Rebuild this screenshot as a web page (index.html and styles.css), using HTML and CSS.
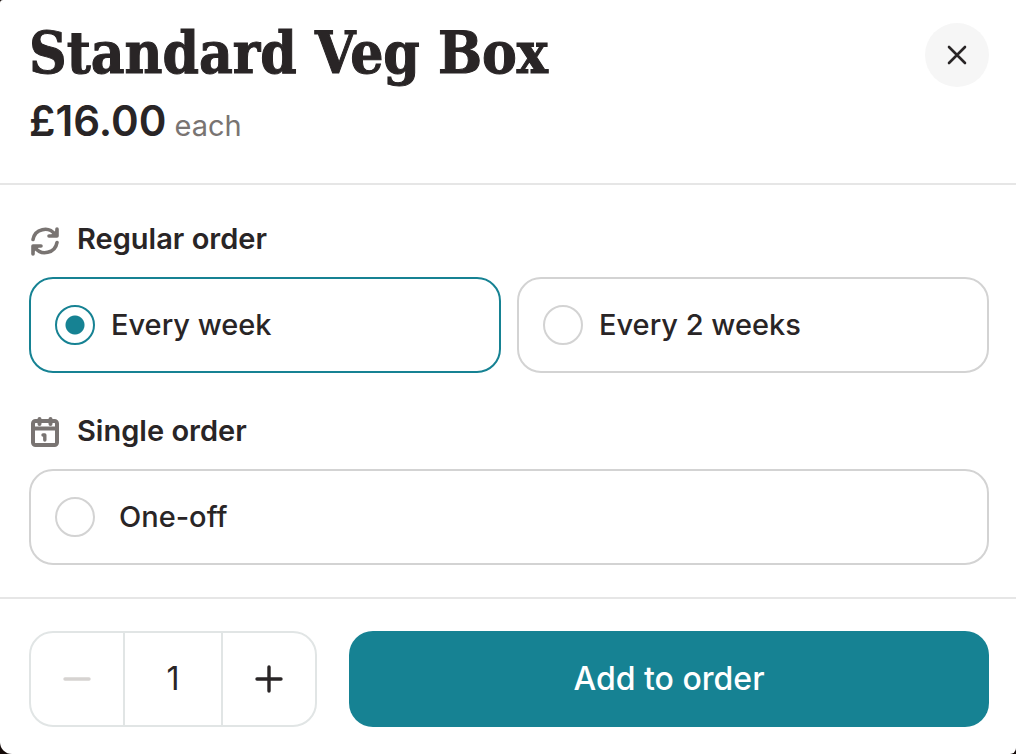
FILE: index.html
```html
<!DOCTYPE html>
<html lang="en">

<head>
    <meta charset="UTF-8">
    <meta name="viewport" content="width=device-width, initial-scale=1.0">
    <title>Standard Veg Box</title>
    <link rel="stylesheet" href="styles.css">
</head>

<body>
    <form action="#" class="dialog">
        <header class="dialog__header">
            <div>
                <h1>Standard Veg Box</h1>
                <p class="price">£16.00<span class="price__unit"> each</span></p>
            </div>
            <button type="button" class="close" aria-label="Close">
                <svg width="20" height="20" viewBox="0 0 20 20" fill="none" stroke="currentColor" stroke-width="2.6"
                    stroke-linecap="round">
                    <path d="M2 2l16 16M18 2L2 18" />
                </svg>
            </button>
        </header>

        <div class="dialog__body">
            <fieldset class="group">
                <legend class="group__title">
                    <svg width="32" height="32" viewBox="0 0 32 32" fill="none" stroke="currentColor" stroke-width="3.6"
                        stroke-linecap="round" stroke-linejoin="round">
                        <path d="M4 14.5A12.2 12.2 0 0 1 26 9.5M28 4v7h-8" />
                        <path d="M28 17.5A12.2 12.2 0 0 1 6 22.5M4 29v-8h8" />
                        <path d="M27.5 6L23 10.5h4.5zM4.5 26L9 21.5H4.5z" fill="currentColor" stroke-width="2" />
                    </svg>
                    Regular order
                </legend>
                <div class="options">
                    <label class="option">
                        <input type="radio" name="frequency" value="1" checked>
                        <span>Every week</span>
                    </label>
                    <label class="option">
                        <input type="radio" name="frequency" value="2">
                        <span>Every 2 weeks</span>
                    </label>
                </div>
            </fieldset>

            <fieldset class="group">
                <legend class="group__title">
                    <svg width="32" height="32" viewBox="0 0 32 32" fill="none" stroke="currentColor" stroke-width="4"
                        stroke-linecap="round" stroke-linejoin="round">
                        <rect x="4" y="4" width="24" height="24" rx="2.5" />
                        <path d="M4 11.5h24M10.5 2v5M21.5 2v5" />
                        <path d="M14 18h1.8v5" stroke-width="3.4" />
                    </svg>
                    Single order
                </legend>
                <label class="option option--single">
                    <input type="radio" name="frequency" value="0">
                    <span>One-off</span>
                </label>
            </fieldset>
        </div>

        <footer class="dialog__footer">
            <div class="stepper">
                <button type="button" class="stepper__btn" aria-label="Decrease quantity" disabled>
                    <svg width="28" height="28" viewBox="0 0 28 28" fill="none" stroke="currentColor" stroke-width="3.4"
                        stroke-linecap="round">
                        <path d="M2 14h24" />
                    </svg>
                </button>
                <input type="text" class="stepper__value" value="1" inputmode="numeric" aria-label="Quantity">
                <button type="button" class="stepper__btn" aria-label="Increase quantity">
                    <svg width="28" height="28" viewBox="0 0 28 28" fill="none" stroke="currentColor" stroke-width="3.4"
                        stroke-linecap="round">
                        <path d="M2 14h24M14 2v24" />
                    </svg>
                </button>
            </div>
            <button type="submit" class="submit">Add to order</button>
        </footer>
    </form>
</body>

</html>
```

FILE: styles.css
```css
* {
    margin: 0;
    padding: 0;
    box-sizing: border-box;
}

body {
    background: #140a08;
    color: #292526;
    font-family: Inter, "Liberation Sans", sans-serif;
    font-size: 29px;
    line-height: 36px;
}

button,
input {
    font: inherit;
    color: inherit;
}

button {
    border: none;
    cursor: pointer;
}

svg {
    display: block;
    flex: none;
    overflow: visible;
}

.dialog {
    display: flex;
    flex-direction: column;
    min-height: 100vh;
    background: #fff;
    border-radius: 3px 0 6px 12px;
}

.dialog__header {
    display: flex;
    justify-content: space-between;
    align-items: flex-start;
    padding: 23px 27px 35px 29px;
    border-bottom: 2px solid #e6e6e6;
}

h1 {
    margin-bottom: 11px;
    font-family: "DejaVu Serif Condensed", "DejaVu Serif", serif;
    font-size: 58px;
    font-weight: 700;
    line-height: 60px;
    -webkit-text-stroke: 1px currentColor;
}

.price {
    font-size: 42px;
    font-weight: 600;
    line-height: 54px;
}

.price__unit {
    font-size: 29px;
    font-weight: 400;
    line-height: 36px;
    color: #797472;
}

.close {
    display: grid;
    place-items: center;
    flex: none;
    width: 64px;
    height: 64px;
    border-radius: 50%;
    background: #f6f6f6;
}

.dialog__body {
    display: flex;
    flex-direction: column;
    flex: 1;
    gap: 40px;
    padding: 36px 27px 32px 29px;
}

.group {
    border: none;
    min-width: 0;
}

.group__title {
    display: flex;
    align-items: flex-end;
    gap: 16px;
    margin-bottom: 20px;
    font-weight: 600;
}

.group__title svg {
    color: #797472;
}

.options {
    display: grid;
    grid-template-columns: 1fr 1fr;
    gap: 16px;
}

.option {
    display: flex;
    align-items: center;
    gap: 16px;
    height: 96px;
    padding: 0 24px;
    border: 2px solid #d3d3d3;
    border-radius: 24px;
    font-weight: 500;
    cursor: pointer;
}

.option--single {
    gap: 24px;
}

.option:has(input:checked) {
    border-color: #168293;
}

.option input {
    appearance: none;
    width: 40px;
    height: 40px;
    border: 2px solid #d3d3d3;
    border-radius: 50%;
}

.option input:checked {
    border-color: #168293;
    background: radial-gradient(circle, #168293 9px, transparent 10px);
}

.dialog__footer {
    display: flex;
    gap: 32px;
    padding: 32px 27px 27px 29px;
    border-top: 2px solid #e6e6e6;
}

.stepper {
    display: grid;
    grid-template-columns: 1fr 100px 1fr;
    width: 288px;
    height: 96px;
    border: 2px solid #e1e5e5;
    border-radius: 24px;
    overflow: hidden;
}

.stepper__btn {
    display: grid;
    place-items: center;
    background: none;
}

.stepper__btn:disabled {
    color: #d6d3d1;
    cursor: default;
}

.stepper__value {
    width: 100%;
    border: solid #e1e5e5;
    border-width: 0 2px;
    background: none;
    font-size: 32px;
    text-align: center;
}

.submit {
    flex: 1;
    border-radius: 24px;
    background: #168293;
    color: #fff;
    font-size: 32px;
    font-weight: 500;
}
```
